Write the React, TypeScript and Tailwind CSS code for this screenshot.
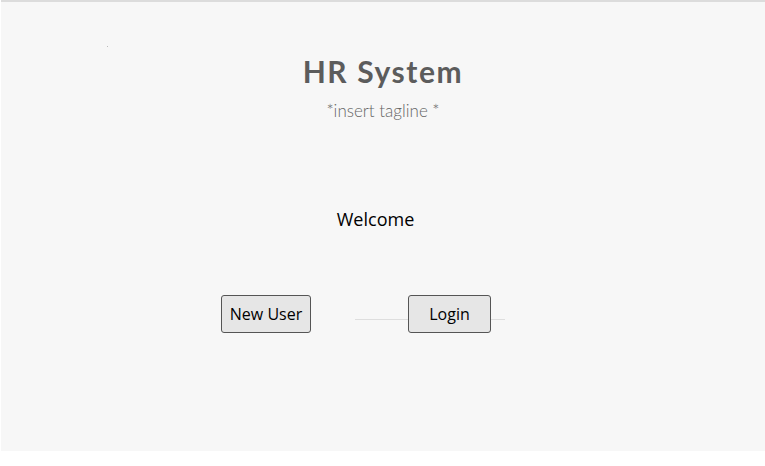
import React from 'react';

const App: React.FC = () => {
  return (
    <div className="w-[765px] h-[466px] bg-white">
      <div className="ml-px h-[451px] border-t-2 border-[#dcdcdc] bg-[#f7f7f7] relative">
        <div className="absolute left-[106px] top-[44px] w-px h-px bg-[#bbbbbb]" />

        <div className="flex flex-col items-center pt-[51px]">
          <h1 className="font-['Lato',sans-serif] font-bold text-[30px] leading-[36px] tracking-[1.6px] text-[#5c5c5c]">
            HR System
          </h1>
          <p className="mt-[12px] font-['Lato',sans-serif] font-light text-[17px] leading-[20px] text-[#666666]">
            *insert tagline *
          </p>
          <h2 className="mt-[86px] mr-[15px] font-['Open_Sans',sans-serif] font-medium text-[18px] leading-[24px] text-black">
            Welcome
          </h2>
        </div>

        <div className="flex items-center pl-[220px] mt-[64px]">
          <button className="w-[90px] h-[38px] border border-[#555] rounded-[3px] bg-[#e6e6e6] font-['Open_Sans',sans-serif] font-medium text-[16px] text-black">
            New User
          </button>
          <div className="relative ml-[44px] w-[150px] h-[38px] flex items-center">
            <div className="absolute left-0 right-0 top-[24px] h-px bg-[#dedede]" />
            <button className="relative ml-[53px] w-[83px] h-[38px] border border-[#555] rounded-[3px] bg-[#e6e6e6] font-['Open_Sans',sans-serif] font-medium text-[16px] text-black">
              Login
            </button>
          </div>
        </div>
      </div>
    </div>
  );
};

export default App;
